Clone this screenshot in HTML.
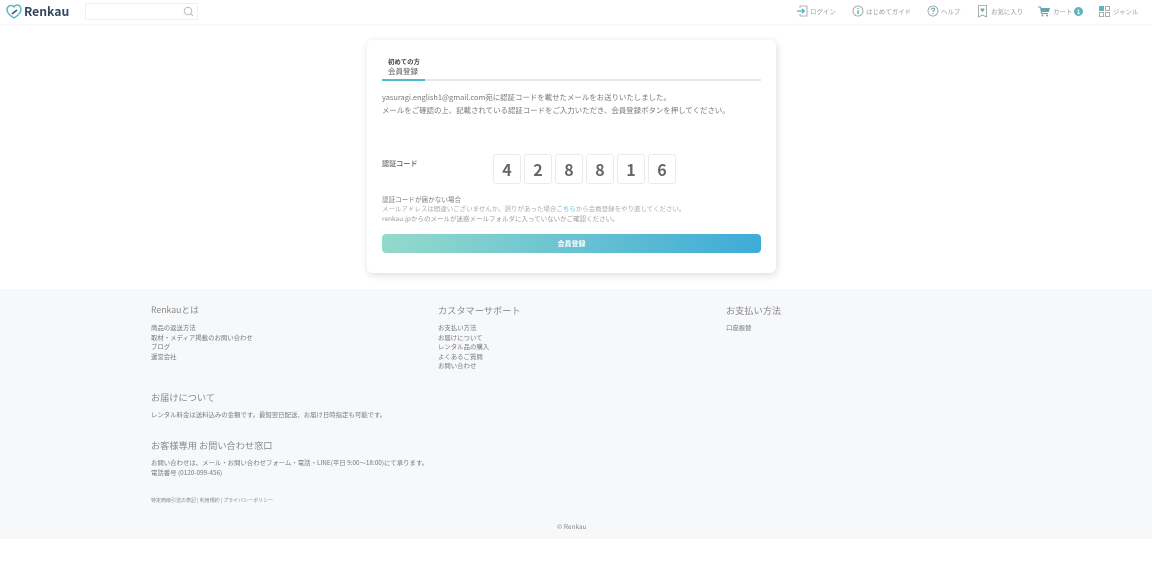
<!DOCTYPE html>
<html lang="ja"><head><meta charset="utf-8"><title>Renkau</title>
<style>
html,body{margin:0;padding:0;width:1152px;height:574px;overflow:hidden;background:#fff}
body{font-family:"Noto Sans CJK JP","Liberation Sans",sans-serif;color:#666;position:relative}
.a{position:absolute;white-space:nowrap;line-height:1.2}
#hdr{position:absolute;left:0;top:0;width:1152px;height:24px;background:#fff;box-shadow:0 1px 2px rgba(0,0,0,.05)}
#ft{position:absolute;left:0;top:289px;width:1152px;height:250px;background:#f7f8fa}
#card{position:absolute;left:367px;top:40px;width:409px;height:233px;background:#fff;border-radius:6px;box-shadow:1px 2px 8px rgba(0,0,0,.14)}
.n{position:absolute;top:153.500px;width:26px;height:28px;border:1px solid #ebebeb;border-radius:3px;background:#fff;text-align:center;font-size:16px;line-height:29px;font-weight:700;color:#666}
.nav{font-size:6.45px;color:#999;top:7.500px}
.ft{font-size:9.200px;color:#888}
.fs{font-size:6.400px;color:#777;line-height:9.600px}
svg{position:absolute;overflow:visible}
</style></head><body>
<div id="hdr"></div>
<svg style="left:6px;top:4px" width="16" height="15" viewBox="0 0 16 15"><path d="M8 14C3 11 1 8.500 1 5.500C1 3 3 1.500 5 1.500C6.200 1.500 7.300 2 8 3C8.700 2 9.800 1 11.200 1C13.500 1 15 3 15 5.500C15 8.500 12 11.500 8 14Z" fill="none" stroke="#58b9c9" stroke-width="1.500"/><path d="M6 10L11 6" stroke="#35566e" stroke-width="1.500"/></svg>
<div class="a" style="left:24px;top:3.500px;font-size:12.200px;font-weight:700;color:#33475b">Renkau</div>
<div class="a" style="left:85px;top:3px;width:111px;height:15px;border:1px solid #f0f0f0"></div>
<svg style="left:183px;top:6px" width="11" height="11" viewBox="0 0 11 11"><circle cx="5" cy="5" r="3.800" fill="none" stroke="#bbb"/><path d="M8 8L10 10" stroke="#bbb"/></svg>

<svg style="left:797px;top:5px" width="11" height="12" viewBox="0 0 11 12"><path d="M3 3V1H10V11H3V9" fill="none" stroke="#999" stroke-width=".8"/><path d="M0 6H7M5 3.800L7.300 6L5 8.200" fill="none" stroke="#45b5bd" stroke-width="1.300"/></svg>
<div class="a nav" style="left:810px">ログイン</div>
<svg style="left:852px;top:5px" width="12" height="12" viewBox="0 0 12 12"><circle cx="6" cy="6" r="5" fill="none" stroke="#999" stroke-width=".8"/><path d="M6 3V4M6 5.200V9" stroke="#45b5bd" stroke-width="1.400"/></svg>
<div class="a nav" style="left:866px">はじめてガイド</div>
<svg style="left:927px;top:5px" width="12" height="12" viewBox="0 0 12 12"><circle cx="6" cy="6" r="5" fill="none" stroke="#999" stroke-width=".8"/><path d="M4.500 4.500C4.500 2.800 7.500 2.800 7.500 4.500C7.500 5.600 6 5.600 6 7M6 8V9" fill="none" stroke="#45b5bd" stroke-width="1.100"/></svg>
<div class="a nav" style="left:941px">ヘルプ</div>
<svg style="left:978px;top:5px" width="9" height="13" viewBox="0 0 9 13"><path d="M.5 .5H8.500V12L4.500 10L.5 12Z" fill="none" stroke="#999" stroke-width=".8"/><path d="M4.500 7L2.500 4.800C2.300 3.200 4 2.900 4.500 4C5 2.900 6.700 3.200 6.500 4.800Z" fill="#45b5bd"/></svg>
<div class="a nav" style="left:991px">お気に入り</div>
<svg style="left:1038px;top:6px" width="12" height="11" viewBox="0 0 12 11"><path d="M0 1H2.500L3.500 7.500H10" fill="none" stroke="#63a6ad" stroke-width="1"/><path d="M2.500 2H12L10.800 6H3.200Z" fill="#63a6ad"/><circle cx="4.500" cy="9.500" r="1" fill="#63a6ad"/><circle cx="9" cy="9.500" r="1" fill="#63a6ad"/></svg>
<div class="a nav" style="left:1053px">カート</div>
<div class="a" style="left:1074px;top:7px;width:9px;height:9px;border-radius:50%;background:#5fb3bd;color:#fff;font-size:6px;line-height:9px;text-align:center;font-weight:700">1</div>
<svg style="left:1099px;top:6px" width="11" height="11" viewBox="0 0 11 11"><rect x="0" y="0" width="5" height="5" fill="#63b5bd"/><rect x="6.500" y=".5" width="4" height="4" fill="none" stroke="#999" stroke-width=".8"/><rect x=".5" y="6.500" width="4" height="4" fill="none" stroke="#999" stroke-width=".8"/><rect x="6.500" y="6.500" width="4" height="4" fill="none" stroke="#999" stroke-width=".8"/></svg>
<div class="a nav" style="left:1113px">ジャンル</div>

<div id="card"></div>
<div class="a" style="left:388px;top:58px;font-size:6.400px;font-weight:700;color:#444">初めての方</div>
<div class="a" style="left:388px;top:67px;font-size:7.500px;color:#555">会員登録</div>
<div class="a" style="left:382px;top:79px;width:379px;height:2px;background:#e4e7e8"></div>
<div class="a" style="left:382px;top:79px;width:43px;height:2px;background:#4fb9d6"></div>
<div class="a" style="left:382px;top:93.500px;font-size:7.430px;color:#777">yasuragi.english1@gmail.com宛に認証コードを載せたメールをお送りいたしました。</div>
<div class="a" style="left:382px;top:107px;font-size:7.430px;color:#777">メールをご確認の上、記載されている認証コードをご入力いただき、会員登録ボタンを押してください。</div>
<div class="a" style="left:382px;top:160px;font-size:7.100px;font-weight:700;color:#777">認証コード</div>
<div class="n" style="left:493px">4</div>
<div class="n" style="left:524px">2</div>
<div class="n" style="left:555px">8</div>
<div class="n" style="left:586px">8</div>
<div class="n" style="left:617px">1</div>
<div class="n" style="left:648px">6</div>
<div class="a" style="left:382px;top:196px;font-size:6.600px;color:#777">認証コードが届かない場合</div>
<div class="a" style="left:382px;top:205px;font-size:6.480px;color:#aaa">メールアドレスは間違いございませんか。誤りがあった場合<span style="color:#5dbbd4">こちら</span>から会員登録をやり直してください。</div>
<div class="a" style="left:382px;top:215px;font-size:6.500px;color:#999">renkau.jpからのメールが迷惑メールフォルダに入っていないかご確認ください。</div>
<div class="a" style="left:382px;top:234px;width:379px;height:19px;border-radius:4px;background:linear-gradient(100deg,#94dacb,#3eabd8);color:#fff;font-size:7px;font-weight:700;text-align:center;line-height:20px">会員登録</div>

<div id="ft"></div>
<div class="a ft" style="left:151px;top:305px;font-size:8.700px">Renkauとは</div>
<div class="a fs" style="left:151px;top:323px">商品の返送方法<br>取材・メディア掲載のお問い合わせ<br>ブログ<br>運営会社</div>
<div class="a ft" style="left:438px;top:305px">カスタマーサポート</div>
<div class="a fs" style="left:438px;top:323px">お支払い方法<br>お届けについて<br>レンタル品の購入<br>よくあるご質問<br>お問い合わせ</div>
<div class="a ft" style="left:726px;top:305px">お支払い方法</div>
<div class="a fs" style="left:726px;top:323px">口座振替</div>
<div class="a ft" style="left:151px;top:392px">お届けについて</div>
<div class="a fs" style="left:151px;top:410px">レンタル料金は送料込みの金額です。最短翌日配送、お届け日時指定も可能です。</div>
<div class="a ft" style="left:151px;top:440px">お客様専用 お問い合わせ窓口</div>
<div class="a fs" style="left:151px;top:458px;line-height:10px">お問い合わせは、メール・お問い合わせフォーム・電話・LINE(平日 9:00〜18:00)にて承ります。<br>電話番号 (0120-099-456)</div>
<div class="a" style="left:151px;top:498px;font-size:5px;color:#888">特定商取引法の表記 | 利用規約 | プライバシーポリシー</div>
<div class="a" style="left:557px;top:523px;font-size:6.500px;color:#888">© Renkau</div>
</body></html>
